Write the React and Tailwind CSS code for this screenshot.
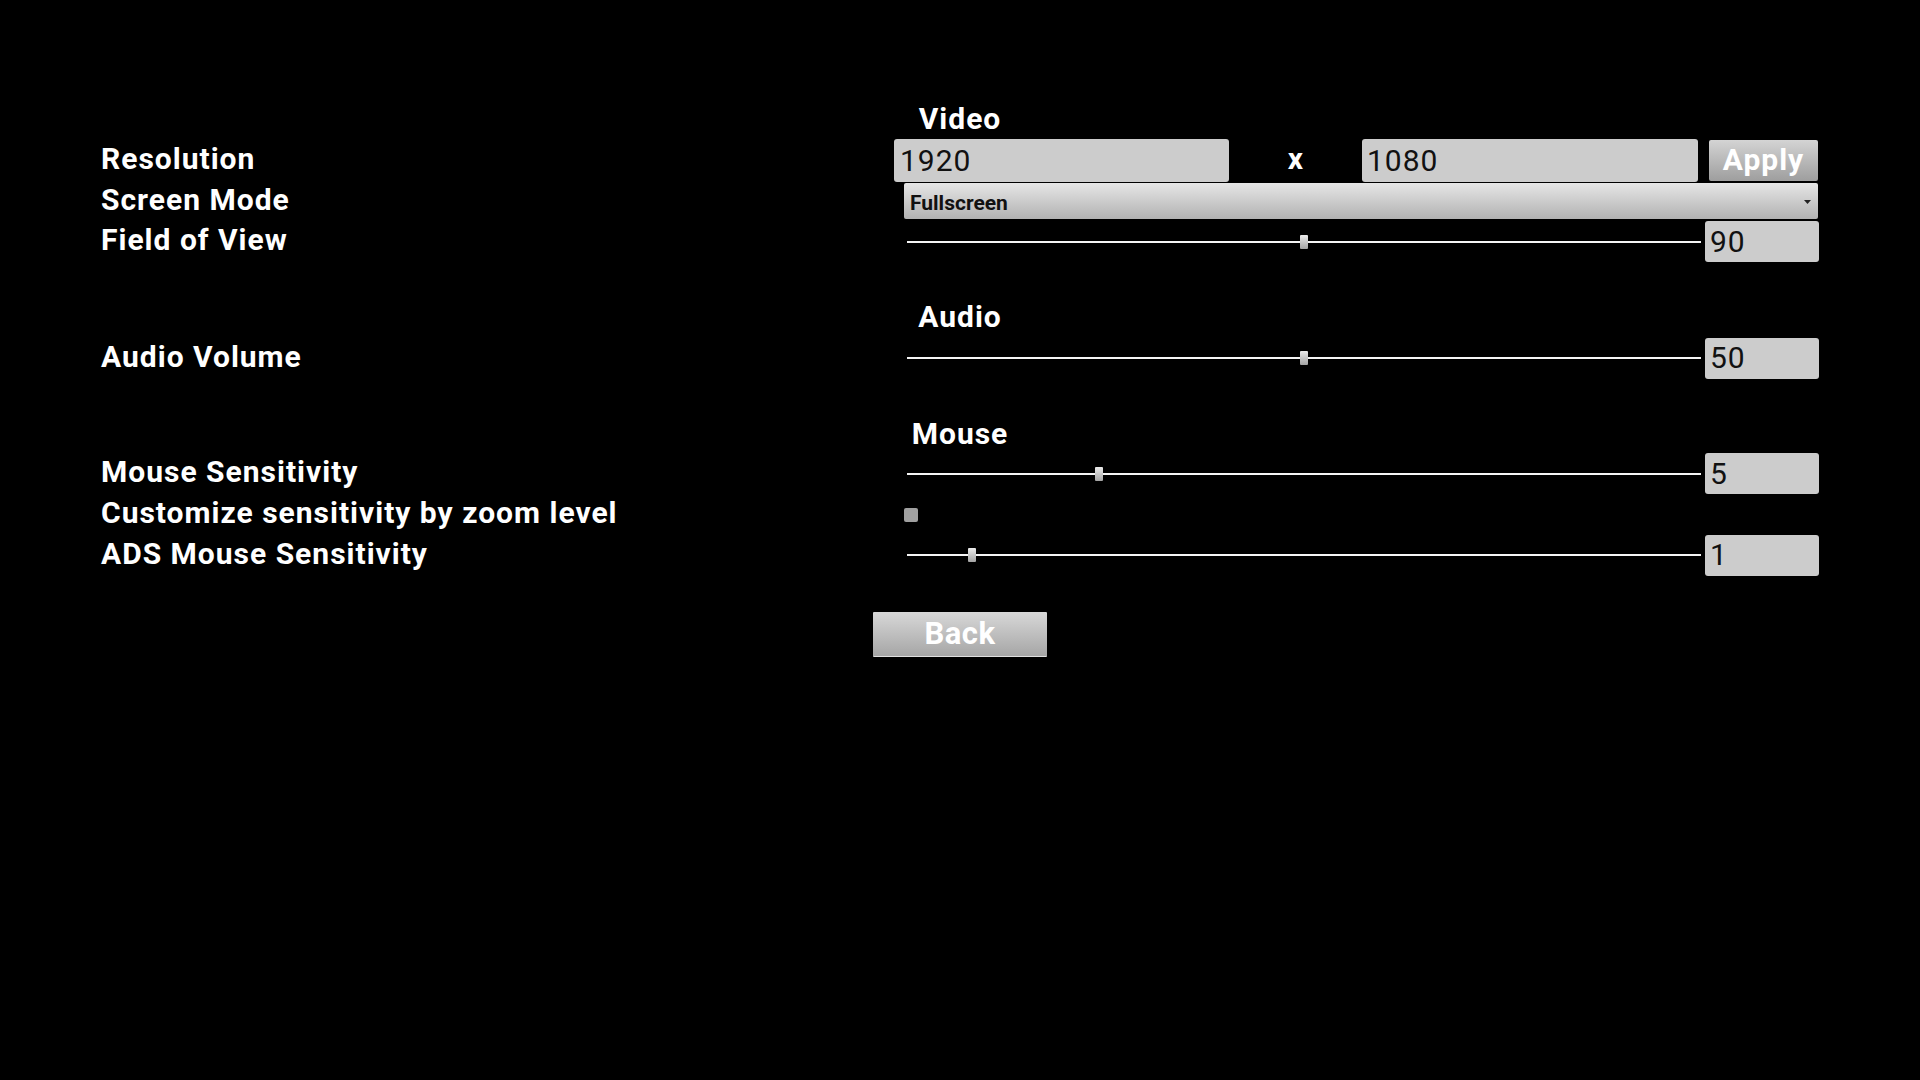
import React from "react";

const Label = ({ children }) => (
  <div className="w-[894px] shrink-0 pl-[101px] text-[30px] font-bold leading-none tracking-[1px] mb-[3px] text-white whitespace-nowrap">
    {children}
  </div>
);

const Title = ({ children, className }) => (
  <div className={`h-[30px] text-[30px] leading-[30px] font-bold tracking-[1px] text-center text-white ${className}`}>
    {children}
  </div>
);

const ValueBox = ({ value }) => (
  <div className="ml-[4px] w-[114px] h-[41px] rounded-[3px] bg-[#cccccc] text-[#111111] text-[30px] leading-none tracking-[1px] pl-[5px] flex items-center">
    {value}
  </div>
);

const Slider = ({ frac, value }) => (
  <div className="flex items-center">
    <div className="ml-[13px] relative w-[794px] h-[2px] bg-[#f4f4f4]">
      <div
        className="absolute top-1/2 -translate-y-1/2 w-[8px] h-[14px] rounded-[1px] bg-linear-to-b from-[#ececec] to-[#a4a4a4]"
        style={{ left: `${frac * 786}px` }}
      />
    </div>
    <ValueBox value={value} />
  </div>
);

export default function App() {
  return (
    <div className="w-full h-[1080px] bg-black text-white font-['Roboto','Liberation_Sans',sans-serif] pt-[104px] overflow-hidden">
      <Title>Video</Title>

      <div className="mt-[5px] h-[43px] flex items-center">
        <Label>Resolution</Label>
        <div className="flex items-center">
          <div className="w-[335px] h-[43px] rounded-[3px] bg-[#cccccc] text-[#111111] text-[30px] leading-none tracking-[1px] pl-[6px] flex items-center">
            1920
          </div>
          <div className="w-[133px] text-center text-[30px] font-bold leading-none mb-[3px]">x</div>
          <div className="w-[336px] h-[43px] rounded-[3px] bg-[#cccccc] text-[#111111] text-[30px] leading-none tracking-[1px] pl-[5px] flex items-center">
            1080
          </div>
          <button className="ml-[11px] w-[109px] h-[41px] rounded-[2px] bg-linear-to-b from-[#d4d4d4] to-[#9e9e9e] text-white text-[30px] font-bold leading-none tracking-[1px] flex items-center justify-center pb-[2px]">
            Apply
          </button>
        </div>
      </div>

      <div className="mt-[1px] h-[36px] flex items-center">
        <Label>Screen Mode</Label>
        <div className="ml-[10px] w-[914px] h-[36px] rounded-[2px] bg-linear-to-b from-[#e6e6e6] to-[#b2b2b2] text-[#111111] text-[21px] font-bold leading-none pl-[6px] pr-[7px] flex items-center justify-between">
          <span className="pt-[4px]">Fullscreen</span>
          <svg width="7" height="4" viewBox="0 0 7 4" className="mt-[2px]">
            <path d="M0 0H7L3.5 4Z" fill="#222222" />
          </svg>
        </div>
      </div>

      <div className="mt-[2px] h-[41px] flex items-center">
        <Label>Field of View</Label>
        <Slider frac={0.5} value="90" />
      </div>

      <Title className="mt-[40px]">Audio</Title>

      <div className="mt-[5px] h-[42px] flex items-center">
        <Label>Audio Volume</Label>
        <Slider frac={0.5} value="50" />
      </div>

      <Title className="mt-[40px]">Mouse</Title>

      <div className="mt-[4px] h-[41px] flex items-center">
        <Label>Mouse Sensitivity</Label>
        <Slider frac={0.239} value="5" />
      </div>

      <div className="h-[40px] flex items-center">
        <Label>Customize sensitivity by zoom level</Label>
        <div className="ml-[10px] mt-[2px] w-[14px] h-[14px] rounded-[2px] bg-[#a0a0a0]" />
      </div>

      <div className="h-[42px] flex items-center">
        <Label>ADS Mouse Sensitivity</Label>
        <Slider frac={0.0776} value="1" />
      </div>

      <div className="mt-[36px] flex justify-center">
        <button className="w-[174px] h-[45px] rounded-[1px] bg-linear-to-b from-[#d8d8d8] to-[#a6a6a6] border-b border-[#e0e0e0] text-white text-[31px] font-bold leading-none tracking-[0.5px] flex items-center justify-center pb-[1px]">
          Back
        </button>
      </div>
    </div>
  );
}
